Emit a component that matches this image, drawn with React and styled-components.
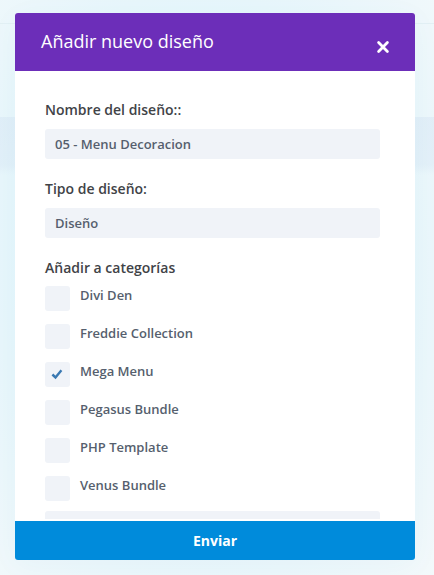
import React, { useState } from "react";
import styled, { createGlobalStyle } from "styled-components";

const GlobalStyle = createGlobalStyle`
  *, *::before, *::after { box-sizing: border-box; }
  body {
    margin: 0;
    font-family: "Open Sans", "Noto Sans", sans-serif;
    background: #eef8fb;
  }
`;

const Page = styled.main`
  display: flex;
  height: 100vh;
  min-height: 320px;
  padding: 13px 19px 15px 15px;
  background:
    linear-gradient(transparent 23px, #e2f0f4 23px, #e2f0f4 24px, transparent 24px),
    linear-gradient(transparent 117px, rgba(215, 230, 244, 0.5) 117px, rgba(215, 230, 244, 0.4) 165px, transparent 175px),
    radial-gradient(ellipse at 45% 45%, #e0f6fd 35%, #e7f6fb 60%, #f3f9fb);
`;

const Dialog = styled.form`
  display: flex;
  flex: 1;
  flex-direction: column;
  min-width: 0;
  overflow: hidden;
  border-radius: 3px;
  background: #fff;
  box-shadow: 0 5px 30px rgba(43, 135, 168, 0.04);
`;

const Header = styled.header`
  display: flex;
  flex: none;
  align-items: flex-start;
  justify-content: space-between;
  padding: 15px 24px 16px 26px;
  background: #6c2eb9;
  color: #fff;
`;

const Title = styled.h1`
  margin: 0;
  font-size: 18px;
  font-weight: 400;
  line-height: 26px;
`;

const CloseButton = styled.button`
  display: flex;
  margin-top: 11px;
  padding: 0;
  border: 0;
  background: none;
  color: #fff;
  cursor: pointer;
`;

const Body = styled.div`
  flex: 1;
  min-height: 0;
  margin-bottom: 2px;
  padding: 25px 35px 30px 30px;
  overflow-y: auto;
  scrollbar-width: none;
`;

const Field = styled.div`
  margin-bottom: 16px;
`;

const labelText = `
  display: block;
  padding: 0;
  color: #414347;
  font-size: 14px;
  font-weight: 600;
  line-height: 27px;
`;

const Label = styled.label`
  ${labelText}
  margin-bottom: 6px;
`;

const TextInput = styled.input`
  display: block;
  width: 100%;
  height: 30px;
  padding: 0 10px;
  border: 0;
  border-radius: 3px;
  background: #f0f3f8;
  color: #565f6e;
  font: 600 13px "Open Sans", "Noto Sans", sans-serif;
`;

const SelectInput = styled(TextInput).attrs({ as: "select" })`
  appearance: none;
`;

const Categories = styled.fieldset`
  min-width: 0;
  margin: 0 0 10px;
  padding: 0;
  border: 0;
`;

const Legend = styled.legend`
  ${labelText}
  margin-bottom: 5px;
`;

const CategoryList = styled.div`
  display: grid;
  gap: 13px;
`;

const Category = styled.label`
  display: flex;
  gap: 10px;
  color: #565f6e;
  font-size: 13px;
  font-weight: 600;
  line-height: 19px;
  cursor: pointer;
`;

const Box = styled.span`
  display: grid;
  flex: none;
  width: 25px;
  height: 25px;
  border-radius: 3px;
  background: #f0f3f8;

  > * { grid-area: 1 / 1; place-self: center; }
`;

const Checkbox = styled.input`
  width: 25px;
  height: 25px;
  margin: 0;
  border-radius: 3px;
  appearance: none;
  cursor: pointer;

  & + svg { visibility: hidden; }
  &:checked + svg { visibility: visible; }
`;

const CheckMark = styled.svg`
  margin: 0 2px 2px 0;
  pointer-events: none;
`;

const SubmitButton = styled.button`
  flex: none;
  height: 39px;
  padding: 0;
  border: 0;
  background: #008bdb;
  color: #fff;
  font: 700 14px "Open Sans", "Noto Sans", sans-serif;
  cursor: pointer;
`;

const categories = [
  "Divi Den",
  "Freddie Collection",
  "Mega Menu",
  "Pegasus Bundle",
  "PHP Template",
  "Venus Bundle",
];

export default function App() {
  const [name, setName] = useState("05 - Menu Decoracion");
  const [selected, setSelected] = useState(["Mega Menu"]);
  const [newCategory, setNewCategory] = useState("");

  const toggle = (item) =>
    setSelected((list) =>
      list.includes(item) ? list.filter((entry) => entry !== item) : [...list, item]
    );

  return (
    <>
      <GlobalStyle />
      <Page>
        <Dialog role="dialog" aria-labelledby="title" onSubmit={(e) => e.preventDefault()}>
          <Header>
            <Title id="title">Añadir nuevo diseño</Title>
            <CloseButton type="button" aria-label="Cerrar">
              <svg width="16" height="16" viewBox="0 0 16 16" aria-hidden="true">
                <path d="M3.6 3.6L12.4 12.4M12.4 3.6L3.6 12.4" stroke="currentColor" strokeWidth="2.8" strokeLinecap="round" />
              </svg>
            </CloseButton>
          </Header>
          <Body>
            <Field>
              <Label htmlFor="name">Nombre del diseño::</Label>
              <TextInput id="name" value={name} onChange={(e) => setName(e.target.value)} />
            </Field>
            <Field>
              <Label htmlFor="type">Tipo de diseño:</Label>
              <SelectInput id="type" defaultValue="layout">
                <option value="layout">Diseño</option>
              </SelectInput>
            </Field>
            <Categories>
              <Legend>Añadir a categorías</Legend>
              <CategoryList>
                {categories.map((item) => (
                  <Category key={item}>
                    <Box>
                      <Checkbox
                        type="checkbox"
                        checked={selected.includes(item)}
                        onChange={() => toggle(item)}
                      />
                      <CheckMark width="12" height="12" viewBox="0 0 12 12" aria-hidden="true">
                        <path d="M1.4 6.5L4.5 9.4L10.4 2.3" fill="none" stroke="#3a79b2" strokeWidth="2.4" />
                      </CheckMark>
                    </Box>
                    {item}
                  </Category>
                ))}
              </CategoryList>
            </Categories>
            <TextInput
              aria-label="Nueva categoría"
              value={newCategory}
              onChange={(e) => setNewCategory(e.target.value)}
            />
          </Body>
          <SubmitButton type="submit">Enviar</SubmitButton>
        </Dialog>
      </Page>
    </>
  );
}
